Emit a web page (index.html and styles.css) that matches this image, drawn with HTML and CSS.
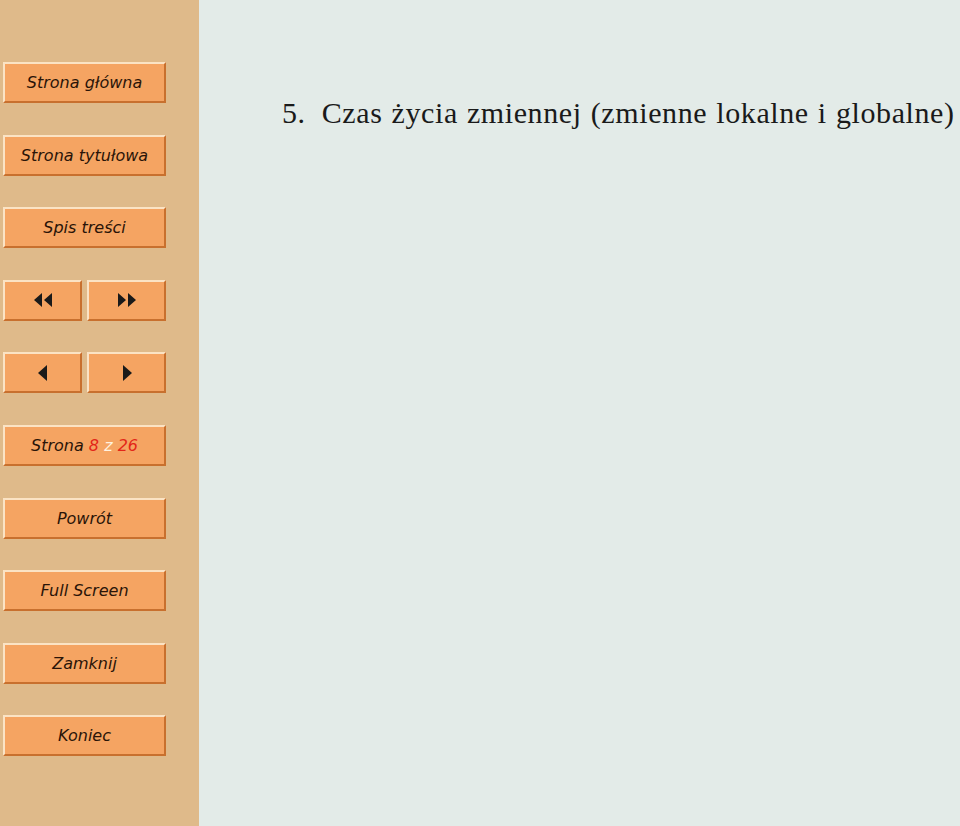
FILE: index.html
```html
<!DOCTYPE html>
<html lang="pl">
<head>
    <meta charset="UTF-8">
    <meta name="viewport" content="width=device-width, initial-scale=1.0">
    <title>Czas życia zmiennej</title>
    <link rel="stylesheet" href="styles.css">
</head>
<body>
    <div class="page">
        <div class="sidebar">
            <a class="btn" href="#">Strona główna</a>
            <a class="btn" href="#">Strona tytułowa</a>
            <a class="btn" href="#">Spis treści</a>
            <div class="pair">
                <a class="btn" href="#">
                    <svg width="24" height="14" viewBox="0 0 24 14"><path d="M11 0 L3 7 L11 14 Z M21 0 L13 7 L21 14 Z" fill="#1a1a1a"/></svg>
                </a>
                <a class="btn" href="#">
                    <svg width="24" height="14" viewBox="0 0 24 14"><path d="M3 0 L11 7 L3 14 Z M13 0 L21 7 L13 14 Z" fill="#1a1a1a"/></svg>
                </a>
            </div>
            <div class="pair">
                <a class="btn" href="#">
                    <svg width="12" height="16" viewBox="0 0 12 16"><path d="M10 0 L1 8 L10 16 Z" fill="#1a1a1a"/></svg>
                </a>
                <a class="btn" href="#">
                    <svg width="12" height="16" viewBox="0 0 12 16"><path d="M2 0 L11 8 L2 16 Z" fill="#1a1a1a"/></svg>
                </a>
            </div>
            <div class="btn"><span>Strona <span class="num">8</span> <span class="of">z</span> <span class="num">26</span></span></div>
            <a class="btn" href="#">Powrót</a>
            <a class="btn" href="#">Full Screen</a>
            <a class="btn" href="#">Zamknij</a>
            <a class="btn" href="#">Koniec</a>
        </div>
        <div class="main">
            <h1><span class="sec">5.</span>Czas życia zmiennej (zmienne lokalne i globalne)</h1>
        </div>
    </div>
</body>
</html>
```

FILE: styles.css
```css
*{
    padding: 0;
    margin: 0;
    box-sizing: border-box;
}
body{
    width: 960px;
    height: 826px;
    overflow: hidden;
    background: #e3ebe8;
}
.page{
    display: flex;
    height: 826px;
}
.sidebar{
    width: 199px;
    flex-shrink: 0;
    background: #dfba8a;
    padding: 62px 33px 0 3px;
    display: flex;
    flex-direction: column;
    gap: 31.6px;
}
.btn{
    display: flex;
    align-items: center;
    justify-content: center;
    height: 41px;
    background: #f5a462;
    border-top: 2px solid #fbe3c4;
    border-left: 2px solid #fbe3c4;
    border-bottom: 2px solid #c8702e;
    border-right: 2px solid #c8702e;
    font-family: "DejaVu Sans", sans-serif;
    font-style: italic;
    font-size: 16px;
    color: #2a1408;
    text-decoration: none;
}
.pair{
    display: flex;
    gap: 5px;
}
.pair .btn{
    flex: 1;
}
.num{
    color: #e32618;
}
.of{
    color: #fff3e0;
}
.main{
    flex: 1;
    min-width: 0;
    padding: 96px 0 0 83px;
}
h1{
    font-family: "Liberation Serif", serif;
    font-weight: normal;
    font-size: 30px;
    letter-spacing: 0.6px;
    word-spacing: 1px;
    color: #1a1a1a;
    white-space: nowrap;
}
.sec{
    margin-right: 16px;
}
```
